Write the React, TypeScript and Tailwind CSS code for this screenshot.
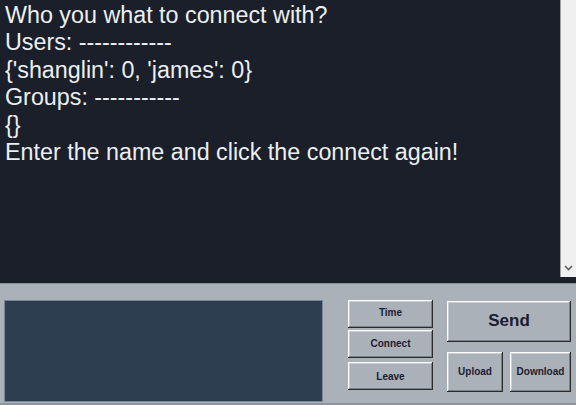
import React from "react";

const lines = [
  "Who you what to connect with?",
  "Users: ------------",
  "{'shanglin': 0, 'james': 0}",
  "Groups: -----------",
  "{}",
  "Enter the name and click the connect again!",
];

const btn =
  "flex items-center justify-center bg-[#abb1b8] text-[#1c1c30] font-bold shadow-[inset_-1px_-1px_0_#2a2a2a,inset_1px_1px_0_#ffffff,inset_-2px_-2px_0_#7c8188,inset_2px_2px_0_#c9ced3]";

export default function App() {
  return (
    <div className="w-[576px] h-[405px] flex flex-col overflow-hidden font-['Liberation_Sans',Arial,sans-serif]">
      <div className="h-[283px] flex bg-[#1a1f29]">
        <div className="flex-1 pl-[5px] pt-[2px] text-[23.3px] leading-[27.4px] text-[#eceff2]">
          {lines.map((l, i) => (
            <div key={i} className="whitespace-pre">
              {l}
            </div>
          ))}
        </div>
        <div className="w-[16px] h-[277px] bg-[#f0f0f0] border-l border-[#a0a0a0] flex flex-col justify-end items-center pb-[6px]">
          <svg width="9" height="6" viewBox="0 0 9 6">
            <path d="M1 1 L4.5 4.5 L8 1" fill="none" stroke="#606060" strokeWidth="1.6" />
          </svg>
        </div>
      </div>
      <div className="flex-1 flex bg-[#abb1b8] border-t border-[#8a9098] border-b-2 border-b-[#8e949b]">
        <div className="ml-[4px] mt-[16px] w-[319px] h-[102px] bg-[#2d3e50] border border-[#7b8794]" />
        <div className="ml-[25px] mt-[16px] flex flex-col">
          <div className={`${btn} w-[85px] h-[28px] text-[10px] pb-[3px]`}>Time</div>
          <div className={`${btn} w-[85px] h-[28px] text-[10px] mt-[2px] pb-[2px]`}>Connect</div>
          <div className={`${btn} w-[85px] h-[28px] text-[10px] mt-[4px]`}>Leave</div>
        </div>
        <div className="ml-[14px] mt-[17px] flex flex-col">
          <div className={`${btn} w-[124px] h-[41px] text-[17px] pb-[2px]`}>Send</div>
          <div className="flex mt-[10px]">
            <div className={`${btn} w-[56px] h-[40px] text-[10px] pb-[2px]`}>Upload</div>
            <div className={`${btn} w-[61px] h-[40px] text-[10px] ml-[7px] pb-[2px]`}>Download</div>
          </div>
        </div>
      </div>
    </div>
  );
}
